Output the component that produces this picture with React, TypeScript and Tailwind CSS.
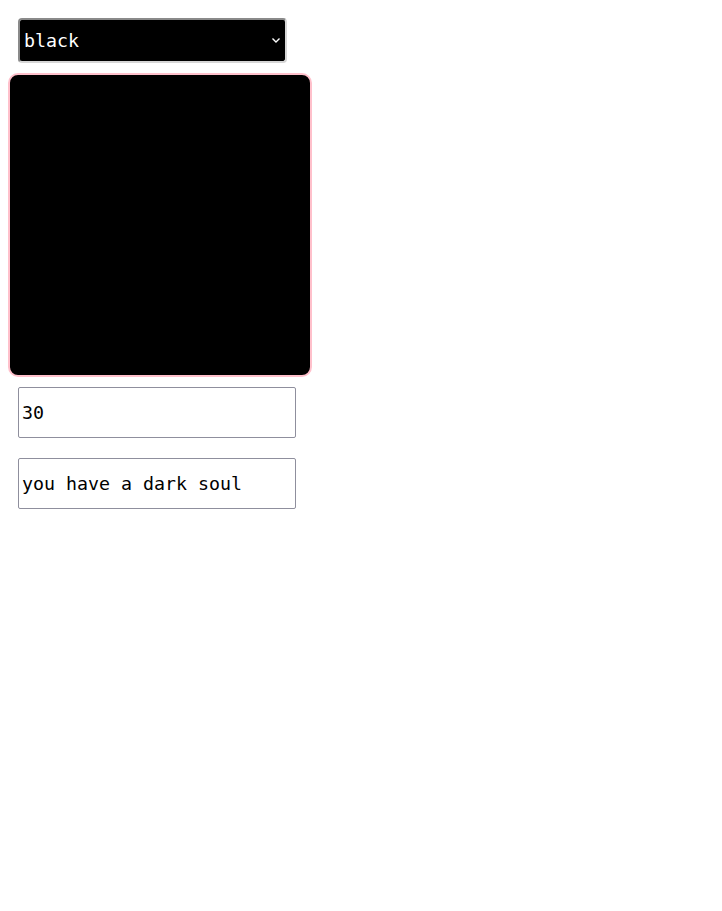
import React, { useState } from "react";

export default function App() {
  const [color, setColor] = useState("black");
  const [age, setAge] = useState("30");
  const [msg, setMsg] = useState("you have a dark soul");

  return (
    <div className="min-h-screen bg-white p-2 font-['DejaVu_Sans_Mono',monospace]">
      {/* color picker */}
      <div className="relative ml-[10px] mt-[10px] w-[269px]">
        <select
          value={color}
          onChange={(e) => setColor(e.target.value)}
          className="block h-[45px] w-full appearance-none rounded-[4px] border-2 border-t-[#8a8a8a] border-l-[#8a8a8a] border-b-[#d6d6d6] border-r-[#d6d6d6] bg-black pl-[4px] text-[18.3px] text-white outline-none"
        >
          <option value="black">black</option>
          <option value="red">red</option>
          <option value="blue">blue</option>
        </select>
        <svg
          className="pointer-events-none absolute right-[6px] top-[19px]"
          width="10"
          height="7"
          viewBox="0 0 10 7"
          fill="none"
          stroke="white"
          strokeWidth="1.4"
        >
          <path d="M1.5 1.5 L5 5 L8.5 1.5" />
        </svg>
      </div>

      {/* swatch */}
      <div className="mt-[10px] h-[304px] w-[304px] rounded-[10px] border-2 border-[#ffc0cb] bg-black" />

      {/* fields */}
      <div className="ml-[10px] mt-[10px] flex flex-col gap-[20px]">
        <input
          value={age}
          onChange={(e) => setAge(e.target.value)}
          className="h-[51px] w-[278px] rounded-[2px] border border-[#8f8f9d] px-[3px] text-[18.3px] text-black outline-none"
        />
        <input
          value={msg}
          onChange={(e) => setMsg(e.target.value)}
          className="h-[51px] w-[278px] rounded-[2px] border border-[#8f8f9d] px-[3px] text-[18.3px] text-black outline-none"
        />
      </div>
    </div>
  );
}
